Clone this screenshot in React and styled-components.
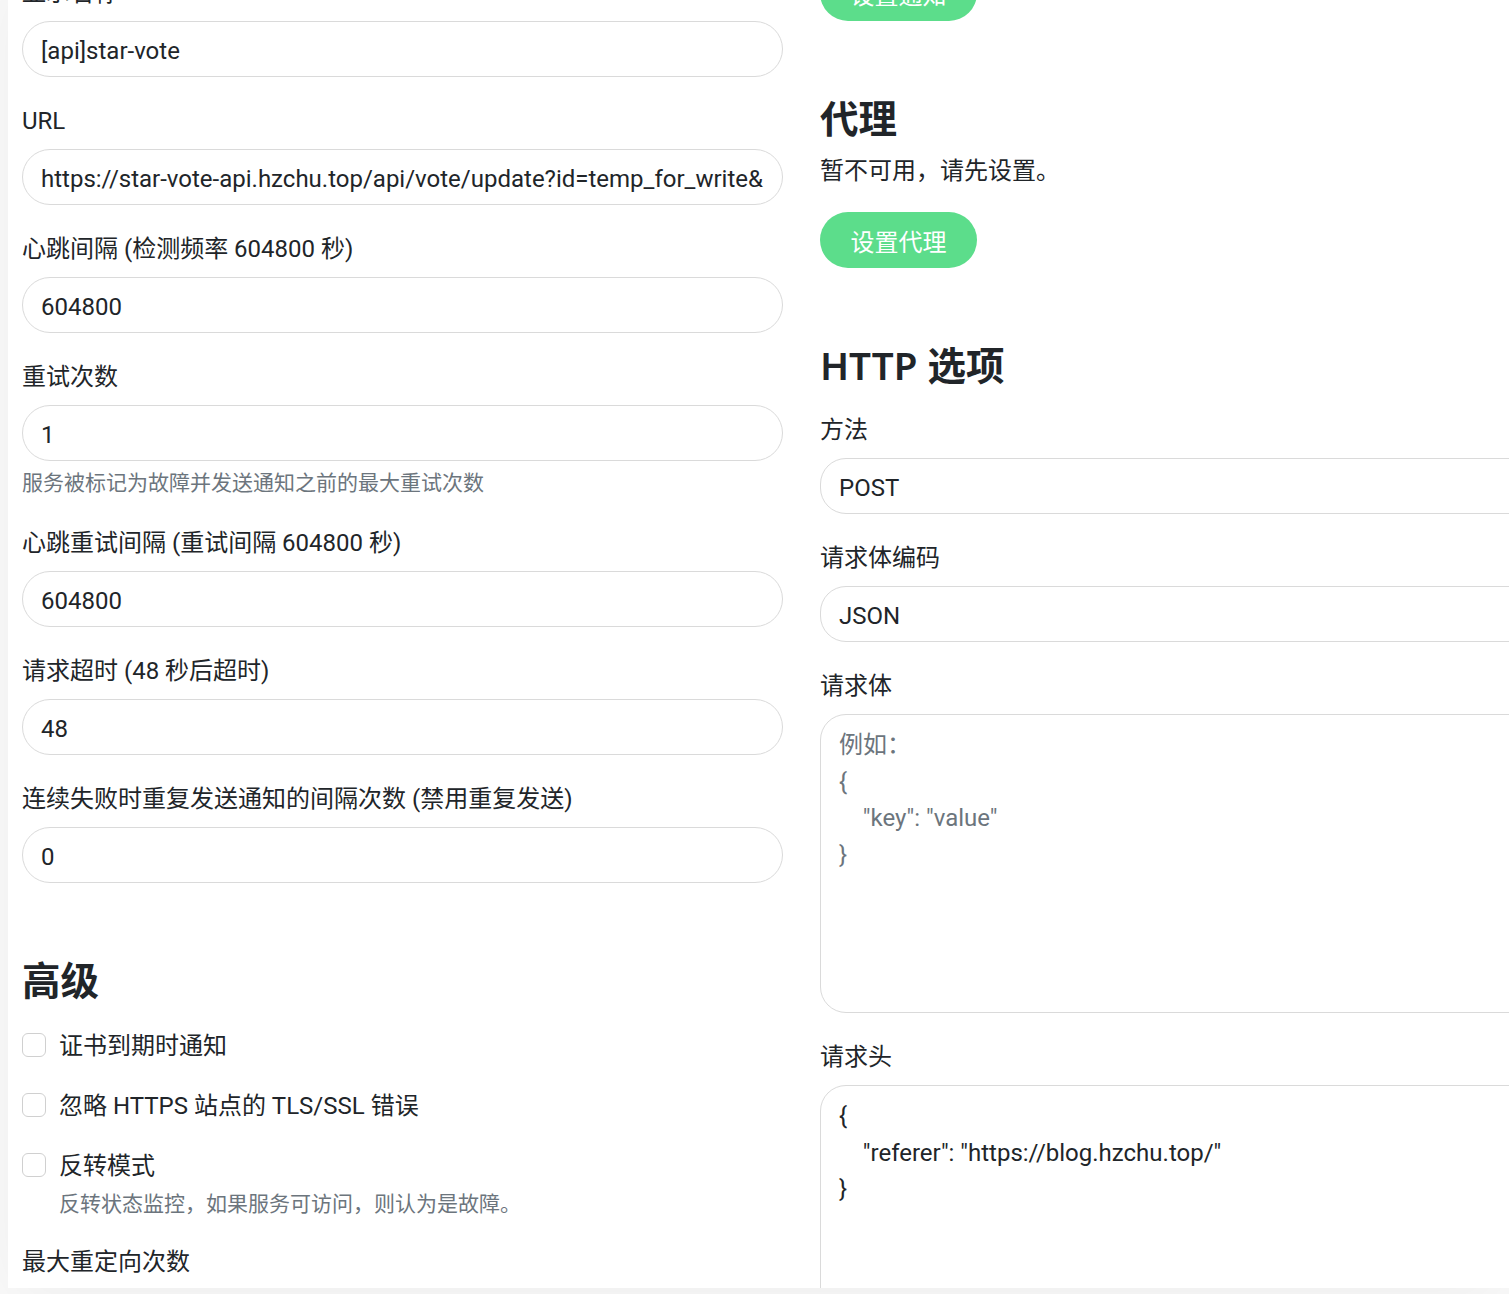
import styled, { createGlobalStyle } from 'styled-components';

const GlobalStyle = createGlobalStyle`
html, body {
    margin: 0;
    padding: 0;
    overflow: hidden;
    background: #fafafa;
}
body {
    font-family: Roboto, "Noto Sans CJK SC", sans-serif;
    font-size: 24px;
    color: #212529;
}
* { box-sizing: border-box; }
`;

export default function App() {
    return (
        <Page>
            <GlobalStyle />
            <Card>
                <Columns>
                    <LeftColumn>
                        <Field>
                            <Label>显示名称</Label>
                            <Input defaultValue="[api]star-vote" />
                        </Field>
                        <Field>
                            <Label>URL</Label>
                            <Input defaultValue="https://star-vote-api.hzchu.top/api/vote/update?id=temp_for_write&key=monitor" />
                        </Field>
                        <Field>
                            <Label>心跳间隔 (检测频率 604800 秒)</Label>
                            <Input defaultValue="604800" />
                        </Field>
                        <Field>
                            <Label>重试次数</Label>
                            <Input defaultValue="1" />
                            <Help>服务被标记为故障并发送通知之前的最大重试次数</Help>
                        </Field>
                        <Field>
                            <Label>心跳重试间隔 (重试间隔 604800 秒)</Label>
                            <Input defaultValue="604800" />
                        </Field>
                        <Field>
                            <Label>请求超时 (48 秒后超时)</Label>
                            <Input defaultValue="48" />
                        </Field>
                        <Field>
                            <Label>连续失败时重复发送通知的间隔次数 (禁用重复发送)</Label>
                            <Input defaultValue="0" />
                        </Field>

                        <Heading>高级</Heading>
                        <CheckRow>
                            <Check type="checkbox" />
                            <CheckText>证书到期时通知</CheckText>
                        </CheckRow>
                        <CheckRow>
                            <Check type="checkbox" />
                            <CheckText>忽略 HTTPS 站点的 TLS/SSL 错误</CheckText>
                        </CheckRow>
                        <CheckRow $tight>
                            <Check type="checkbox" />
                            <CheckText>反转模式</CheckText>
                        </CheckRow>
                        <CheckHelp>反转状态监控，如果服务可访问，则认为是故障。</CheckHelp>
                        <Field>
                            <Label>最大重定向次数</Label>
                            <Input defaultValue="10" />
                        </Field>
                    </LeftColumn>

                    <RightColumn>
                        <GreenButton>设置通知</GreenButton>

                        <Heading $mb={13}>代理</Heading>
                        <Text>暂不可用，请先设置。</Text>
                        <GreenButton>设置代理</GreenButton>

                        <Heading>HTTP 选项</Heading>
                        <Field>
                            <Label>方法</Label>
                            <Select defaultValue="POST">
                                <option>GET</option>
                                <option>POST</option>
                                <option>PUT</option>
                            </Select>
                        </Field>
                        <Field>
                            <Label>请求体编码</Label>
                            <Select defaultValue="JSON">
                                <option>JSON</option>
                                <option>XML</option>
                            </Select>
                        </Field>
                        <Field>
                            <Label>请求体</Label>
                            <TextArea
                                $height={299}
                                placeholder={'例如：\n{\n    "key": "value"\n}'}
                            />
                        </Field>
                        <Field>
                            <Label>请求头</Label>
                            <TextArea
                                $height={260}
                                defaultValue={'{\n    "referer": "https://blog.hzchu.top/"\n}'}
                            />
                        </Field>
                    </RightColumn>
                </Columns>
            </Card>
        </Page>
    );
}

const Page = styled.div`
    height: 1294px;
    overflow: hidden;
    padding-left: 8px;
`;

const Card = styled.div`
    margin-top: -35px;
    height: 1323px;
    overflow: hidden;
    background: #fff;
    padding-left: 14px;
    box-shadow: 0 15px 70px rgba(0, 0, 0, 0.05);
`;

const Columns = styled.div`
    display: grid;
    grid-template-columns: 761px 761px;
    column-gap: 37px;
    align-items: start;
`;

const LeftColumn = styled.div`
    display: flex;
    flex-direction: column;
    padding-top: 11px;
`;

const RightColumn = styled.div`
    display: flex;
    flex-direction: column;
    align-items: flex-start;
`;

const Field = styled.div`
    display: flex;
    flex-direction: column;
    align-self: stretch;
    margin-bottom: 27px;
`;

const Label = styled.label`
    padding-top: 2px;
    line-height: 31px;
    margin-bottom: 12px;
`;

const Input = styled.input`
    height: 56px;
    padding: 4px 18px 0;
    border: 1px solid #dadada;
    border-radius: 28px;
    font: inherit;
    color: #212529;
    background: #fff;
    outline: none;
`;

const Select = styled.select`
    height: 56px;
    padding: 4px 18px 0;
    border: 1px solid #dadada;
    border-radius: 26px;
    font: inherit;
    color: #212529;
    background: #fff;
    appearance: none;
    outline: none;
`;

const TextArea = styled.textarea`
    height: ${(p) => p.$height}px;
    padding: 12px 18px 10px;
    border: 1px solid #dadada;
    border-radius: 26px;
    font: inherit;
    line-height: 36.5px;
    color: #212529;
    background: #fff;
    resize: none;
    outline: none;
    &::placeholder {
        color: #6c757d;
    }
`;

const Help = styled.div`
    margin-top: 8px;
    margin-bottom: 1px;
    font-size: 21px;
    line-height: 29px;
    color: #6c757d;
`;

const Heading = styled.h2`
    margin: 47px 0 ${(p) => p.$mb ?? 25}px;
    font-family: "Noto Sans", "Noto Sans CJK SC", sans-serif;
    font-size: 38.5px;
    line-height: 46px;
    font-weight: 600;
    color: #212529;
`;

const Text = styled.p`
    margin: 0 0 25px;
    padding-top: 2px;
    line-height: 31px;
`;

const GreenButton = styled.button`
    height: 56px;
    padding: 0 30.5px;
    border: none;
    border-radius: 28px;
    background: #5cdd8b;
    color: #fff;
    font: inherit;
    cursor: pointer;
    margin-bottom: 27px;
`;

const CheckRow = styled.label`
    display: flex;
    align-items: center;
    gap: 13px;
    height: 33px;
    margin-bottom: ${(p) => (p.$tight ? 0 : 27)}px;
`;

const CheckText = styled.span`
    padding-top: 3px;
    line-height: 30px;
`;

const Check = styled.input`
    appearance: none;
    width: 24px;
    height: 24px;
    margin: 0;
    border: 1px solid #d0d0d0;
    border-radius: 6px;
    background: #fff;
`;

const CheckHelp = styled.div`
    margin: 8px 0 27px 37px;
    padding-top: 1px;
    font-size: 21px;
    line-height: 28px;
    color: #6c757d;
`;
